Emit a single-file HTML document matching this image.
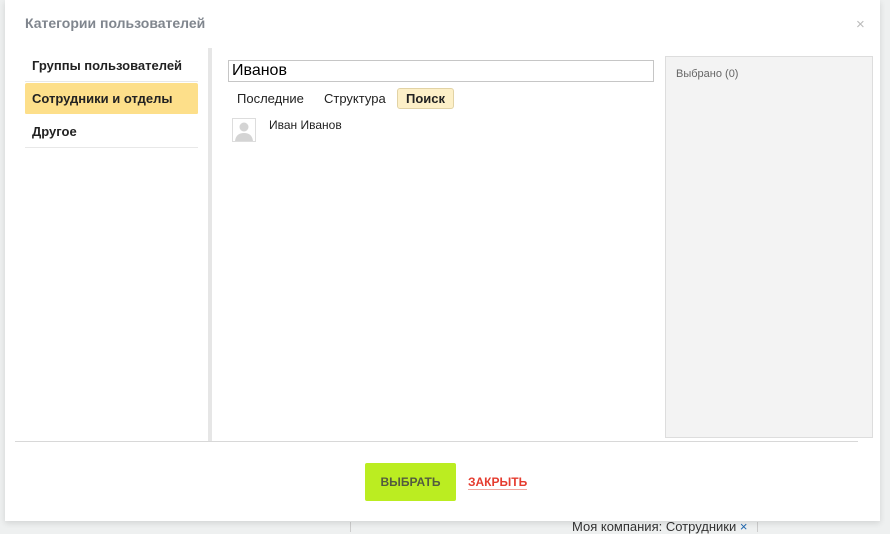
<!DOCTYPE html>
<html><head><meta charset="utf-8"><style>
body{margin:0;width:890px;height:530px;background:#eef0f0;position:relative;overflow:hidden;font-family:"Liberation Sans",Arial,sans-serif}
.bgline{position:absolute;top:522px;width:1px;height:10px;background:#ccc}
.bgtext{position:absolute;left:572px;top:519px;font-size:13px;color:#333}
.dlg{position:absolute;left:5px;top:0;width:875px;height:521px;background:#fff;box-shadow:0 2px 6px rgba(0,0,0,.12)}
.title{position:absolute;left:20px;top:15px;font-size:14px;font-weight:bold;color:#80868e}
.x{position:absolute;left:851px;top:16px;font-size:15px;color:#bbb}
.nav{position:absolute;left:20px;width:173px;font-size:13px;font-weight:bold;color:#222}
.nav div{height:31px;line-height:31px;padding-left:7px;border-bottom:1px solid #e8e8e8;margin:0 0 1px}
.nav .act{background:#fddf8a;border-radius:2px;border-bottom-color:#fff}
.vsep{position:absolute;left:203px;top:48px;width:4px;height:393px;background:#e6e6e6}
.inp{position:absolute;left:223px;top:60px;width:421px;height:20px;border:1px solid #c6c6c6;font-size:16px;line-height:20px;padding-left:3px;color:#000}
.tabs{position:absolute;left:232px;top:89px;font-size:13px;color:#222}
.tabs span{position:absolute;white-space:nowrap}
.tab-a{background:#fdf0c8;border:1px solid #e2d3a5;border-radius:3px;padding:2px 8px;font-weight:bold;top:-1px}
.ava{position:absolute;left:227px;top:118px;width:22px;height:22px;border:1px solid #ddd;background:#fff;overflow:hidden}
.name{position:absolute;left:264px;top:118px;font-size:12px;color:#222}
.right{position:absolute;left:660px;top:56px;width:206px;height:380px;background:#f3f3f3;border:1px solid #ddd}
.right span{position:absolute;left:10px;top:11px;font-size:11px;color:#666}
.hsep{position:absolute;left:10px;top:441px;width:843px;height:1px;background:#d8d8d8}
.btn{position:absolute;left:360px;top:463px;width:91px;height:38px;background:#bbed21;border-radius:2px;font-size:12px;font-weight:bold;color:#535c3f;text-align:center;line-height:38px}
.close{position:absolute;left:463px;top:475px;font-size:12px;font-weight:bold;color:#e53c2f;border-bottom:1px solid #f0a8a0;line-height:14px}
</style></head><body>
<div class="bgline" style="left:350px"></div><div class="bgline" style="left:757px"></div>
<div class="bgtext">Моя компания: Сотрудники <span style="color:#2067b0">×</span></div>
<div class="dlg">
<div class="title">Категории пользователей</div>
<div class="x">×</div>
<div class="nav" style="top:50px">
<div>Группы пользователей</div>
<div class="act">Сотрудники и отделы</div>
<div>Другое</div>
</div>
<div class="vsep"></div>
<div class="inp">Иванов</div>
<div class="tabs"><span style="left:0;top:2px">Последние</span><span style="left:87px;top:2px">Структура</span><span class="tab-a" style="left:160px">Поиск</span></div>
<div class="ava"><svg width="22" height="22" viewBox="0 0 22 22"><circle cx="11" cy="8" r="4.5" fill="#d4d4d4"/><path d="M2 22 Q3 14 11 14 Q19 14 20 22Z" fill="#d4d4d4"/></svg></div>
<div class="name">Иван Иванов</div>
<div class="right"><span>Выбрано (0)</span></div>
<div class="hsep"></div>
<div class="btn">ВЫБРАТЬ</div>
<div class="close">ЗАКРЫТЬ</div>
</div>
</body></html>
